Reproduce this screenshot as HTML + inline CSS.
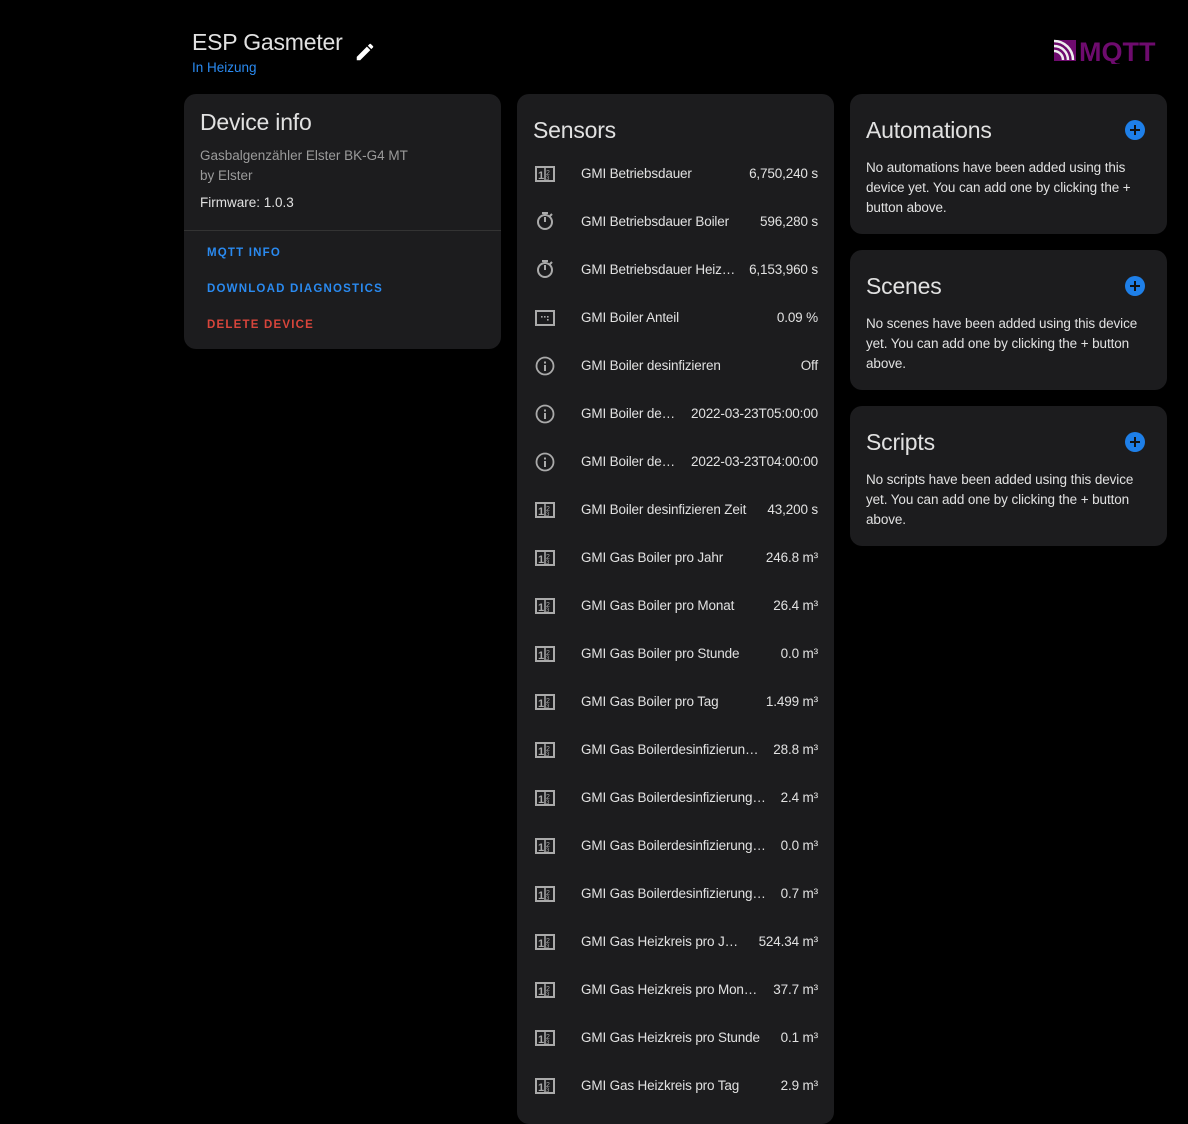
<!DOCTYPE html>
<html><head><meta charset="utf-8"><style>
*{box-sizing:border-box;margin:0;padding:0}
body{width:1188px;height:1100px;background:#000;font-family:"Liberation Sans",sans-serif;color:#e1e1e1;position:relative;overflow:hidden}
.card{position:absolute;background:#1c1c1e;border-radius:12px}
.abs{position:absolute}
.h{font-size:23px;letter-spacing:-0.2px;color:#e1e1e1;white-space:nowrap}
.btn{position:absolute;left:23px;font-size:11.5px;font-weight:bold;letter-spacing:1.2px;color:#2a8af0}
.row{position:absolute;left:0;width:317px;height:48px}
.row .ic{position:absolute;left:18px;top:14px;width:20px;height:20px}
.row .n{position:absolute;left:64px;top:16px;font-size:13.5px;letter-spacing:-0.15px;color:#e1e1e1;white-space:nowrap}
.row .v{position:absolute;right:16px;top:16px;font-size:13.5px;letter-spacing:-0.15px;color:#e1e1e1;white-space:nowrap}
.p{position:absolute;left:16px;top:64px;width:290px;font-size:13.5px;letter-spacing:-0.1px;line-height:20px;color:#e1e1e1}
.plus{position:absolute;right:22px;top:26px;width:20px;height:20px;border-radius:50%;background:#1e7fe8}
.plus:before{content:"";position:absolute;left:5px;top:9px;width:10px;height:2px;background:#111}
.plus:after{content:"";position:absolute;left:9px;top:5px;width:2px;height:10px;background:#111}
</style></head><body>
<div class="abs h" style="left:192px;top:29px;">ESP Gasmeter</div>
<svg class="abs" style="left:354px;top:41px" width="22" height="22" viewBox="0 0 24 24"><path fill="#fff" d="M20.71 7.04c.39-.39.39-1.04 0-1.41l-2.34-2.34c-.37-.39-1.02-.39-1.41 0l-1.84 1.83 3.75 3.75M3 17.25V21h3.75L17.81 9.93l-3.75-3.75L3 17.25z"/></svg>
<div class="abs" style="left:192px;top:60px;font-size:13.5px;color:#2a8af0">In Heizung</div>
<svg class="abs" style="left:1054px;top:38px" width="112" height="26" viewBox="0 0 112 26">
<rect x="0" y="2" width="22" height="21" fill="#6e0b6e"/>
<path d="M0 8 A14 14 0 0 1 14 22 M0 3 A19 19 0 0 1 19 22 M0 13 A9 9 0 0 1 9 22" stroke="#eee" stroke-width="2.5" fill="none"/>
<text x="25" y="23" font-family="Liberation Sans" font-weight="bold" font-size="27" fill="#6e0b6e">MQTT</text></svg>

<div class="card" style="left:184px;top:94px;width:317px;height:255px">
<div class="abs h" style="left:16px;top:15px">Device info</div>
<div class="abs" style="left:16px;top:52px;font-size:13.5px;line-height:20px;color:#9b9b9b">Gasbalgenzähler Elster BK-G4 MT<br>by Elster</div>
<div class="abs" style="left:16px;top:101px;font-size:13.5px">Firmware: 1.0.3</div>
<div class="abs" style="left:0;top:136px;width:317px;height:1px;background:#333"></div>
<div class="btn" style="top:153px">MQTT INFO</div>
<div class="btn" style="top:189px">DOWNLOAD DIAGNOSTICS</div>
<div class="btn" style="top:225px;color:#d8453b">DELETE DEVICE</div>
</div>

<div class="card" style="left:517px;top:94px;width:317px;height:1030px">
<div class="abs h" style="left:16px;top:23px">Sensors</div>
<div id="rows"></div>
</div>

<div class="card" style="left:850px;top:94px;width:317px;height:140px">
<div class="abs h" style="left:16px;top:23px">Automations</div><div class="plus"></div>
<div class="p">No automations have been added using this device yet. You can add one by clicking the + button above.</div></div>
<div class="card" style="left:850px;top:250px;width:317px;height:140px">
<div class="abs h" style="left:16px;top:23px">Scenes</div><div class="plus"></div>
<div class="p">No scenes have been added using this device yet. You can add one by clicking the + button above.</div></div>
<div class="card" style="left:850px;top:406px;width:317px;height:140px">
<div class="abs h" style="left:16px;top:23px">Scripts</div><div class="plus"></div>
<div class="p">No scripts have been added using this device yet. You can add one by clicking the + button above.</div></div>

<script>
var N='<svg class="ic" viewBox="0 0 20 20"><rect x="1" y="3" width="18" height="14" fill="none" stroke="#aaa" stroke-width="2"/><line x1="10" y1="3" x2="10" y2="17" stroke="#aaa" stroke-width="1.5"/><text x="3" y="15" font-size="11" font-weight="bold" fill="#aaa" font-family="Liberation Sans">1</text><text x="11" y="11" font-size="7" fill="#aaa" font-family="Liberation Sans">2</text><text x="11" y="16" font-size="6" fill="#aaa" font-family="Liberation Sans">3</text></svg>';
var T='<svg class="ic" viewBox="0 0 20 20"><circle cx="10" cy="10" r="7" fill="none" stroke="#aaa" stroke-width="2"/><rect x="7" y="0" width="6" height="2" fill="#aaa"/><line x1="10" y1="10" x2="10" y2="5" stroke="#aaa" stroke-width="2"/><line x1="15" y1="4" x2="17" y2="2" stroke="#aaa" stroke-width="2"/><text x="5" y="22" font-size="6" fill="#aaa">···</text></svg>';
var D='<svg class="ic" viewBox="0 0 20 20"><rect x="1" y="3" width="18" height="14" fill="none" stroke="#aaa" stroke-width="2"/><rect x="6" y="8" width="1.6" height="1.6" fill="#aaa"/><rect x="9" y="8" width="1.6" height="1.6" fill="#aaa"/><rect x="12" y="8" width="1.6" height="1.6" fill="#aaa"/><rect x="12" y="11" width="1.6" height="1.6" fill="#aaa"/></svg>';
var I='<svg class="ic" viewBox="0 0 20 20"><circle cx="10" cy="10" r="8.5" fill="none" stroke="#aaa" stroke-width="1.8"/><rect x="9" y="9" width="2" height="6" fill="#aaa"/><rect x="9" y="5.5" width="2" height="2" fill="#aaa"/></svg>';
var r=[[N,"GMI Betriebsdauer","6,750,240 s"],[T,"GMI Betriebsdauer Boiler","596,280 s"],[T,"GMI Betriebsdauer Heiz…","6,153,960 s"],[D,"GMI Boiler Anteil","0.09 %"],[I,"GMI Boiler desinfizieren","Off"],[I,"GMI Boiler de…","2022-03-23T05:00:00"],[I,"GMI Boiler de…","2022-03-23T04:00:00"],[N,"GMI Boiler desinfizieren Zeit","43,200 s"],[N,"GMI Gas Boiler pro Jahr","246.8 m³"],[N,"GMI Gas Boiler pro Monat","26.4 m³"],[N,"GMI Gas Boiler pro Stunde","0.0 m³"],[N,"GMI Gas Boiler pro Tag","1.499 m³"],[N,"GMI Gas Boilerdesinfizierun…","28.8 m³"],[N,"GMI Gas Boilerdesinfizierung…","2.4 m³"],[N,"GMI Gas Boilerdesinfizierung…","0.0 m³"],[N,"GMI Gas Boilerdesinfizierung…","0.7 m³"],[N,"GMI Gas Heizkreis pro J…","524.34 m³"],[N,"GMI Gas Heizkreis pro Mon…","37.7 m³"],[N,"GMI Gas Heizkreis pro Stunde","0.1 m³"],[N,"GMI Gas Heizkreis pro Tag","2.9 m³"]];
var h="";r.forEach(function(x,i){h+='<div class="row" style="top:'+(56+i*48)+'px">'+x[0]+'<div class="n">'+x[1]+'</div><div class="v">'+x[2]+'</div></div>'});
document.getElementById("rows").innerHTML=h;
</script>
</body></html>
